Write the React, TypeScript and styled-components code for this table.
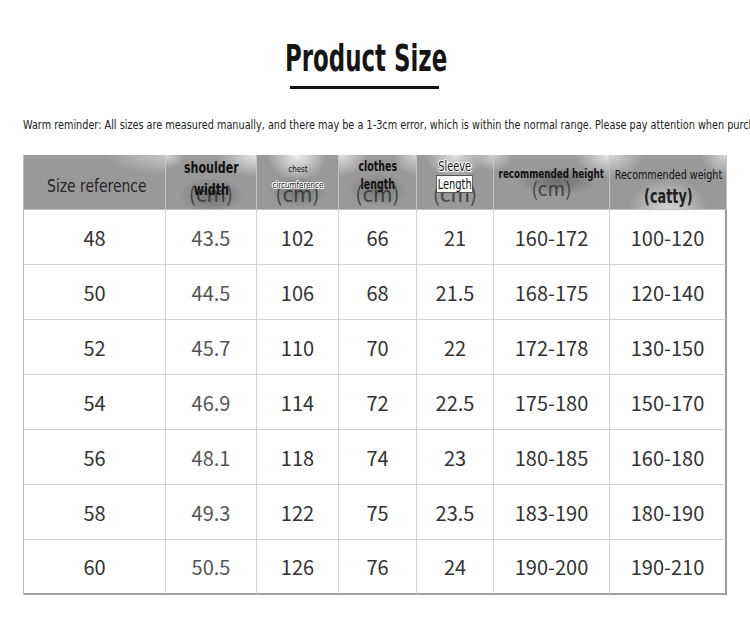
import React from 'react';
import styled, {createGlobalStyle} from 'styled-components';

const Narrow = `"Liberation Sans Narrow", "DejaVu Sans Condensed", "Roboto", sans-serif`;
const Digits = `"Noto Sans CJK SC", "Noto Sans", sans-serif`;

const rows = [
    ['48', '43.5', '102', '66', '21', '160-172', '100-120'],
    ['50', '44.5', '106', '68', '21.5', '168-175', '120-140'],
    ['52', '45.7', '110', '70', '22', '172-178', '130-150'],
    ['54', '46.9', '114', '72', '22.5', '175-180', '150-170'],
    ['56', '48.1', '118', '74', '23', '180-185', '160-180'],
    ['58', '49.3', '122', '75', '23.5', '183-190', '180-190'],
    ['60', '50.5', '126', '76', '24', '190-200', '190-210'],
];

const App = () => {
    return (
        <Page>
            <GlobalStyle/>
            <Title>Product Size</Title>
            <Underline/>
            <Reminder>
                Warm reminder: All sizes are measured manually, and there may be a 1-3cm error, which is within the normal range. Please pay attention when purchasing.
            </Reminder>
            <Table>
                <HeadCell $glow="radial-gradient(ellipse 60px 20px at 100% 0%, rgba(255,255,255,.45), transparent)">
                    <SizeRef>Size reference</SizeRef>
                </HeadCell>
                <HeadCell $glow="radial-gradient(ellipse 40px 22px at 100% 0%, rgba(255,255,255,.75), transparent), radial-gradient(ellipse 20px 14px at 0% 0%, rgba(255,255,255,.6), transparent), radial-gradient(ellipse 32px 18px at 50% 75%, rgba(50,50,50,.4), transparent)">
                    <Label $size={15} $top={2} $sx={0.82}>shoulder<br/>width</Label>
                    <Unit>(cm)</Unit>
                </HeadCell>
                <HeadCell $glow="radial-gradient(ellipse 30px 26px at 50% 0%, rgba(255,255,255,.85), transparent), radial-gradient(ellipse 30px 16px at 50% 68%, rgba(50,50,50,.35), transparent)">
                    <Label $size={9} $top={6} $weight={400} $sx={0.88}>chest<br/><Outlined>circumference</Outlined></Label>
                    <Unit>(cm)</Unit>
                </HeadCell>
                <HeadCell $glow="radial-gradient(ellipse 30px 22px at 0% 0%, rgba(255,255,255,.7), transparent), radial-gradient(ellipse 24px 20px at 100% 0%, rgba(255,255,255,.6), transparent), radial-gradient(ellipse 30px 16px at 50% 65%, rgba(50,50,50,.35), transparent)">
                    <Label $size={14} $top={2} $lh={18} $sx={0.75}>clothes<br/>length</Label>
                    <Unit>(cm)</Unit>
                </HeadCell>
                <HeadCell $glow="radial-gradient(ellipse 30px 24px at 50% 0%, rgba(255,255,255,.7), transparent), radial-gradient(ellipse 20px 16px at 100% 0%, rgba(255,255,255,.6), transparent)">
                    <Label $size={14} $top={2} $lh={18} $weight={400} $sx={0.78}>
                        <Outlined>Sleeve</Outlined><br/><Boxed>Length</Boxed>
                    </Label>
                    <Unit>(cm)</Unit>
                </HeadCell>
                <HeadCell $glow="radial-gradient(ellipse 34px 22px at 100% 0%, rgba(255,255,255,.75), transparent), radial-gradient(ellipse 20px 16px at 0% 0%, rgba(255,255,255,.5), transparent), radial-gradient(ellipse 40px 14px at 55% 48%, rgba(40,40,40,.4), transparent)">
                    <Label $size={13} $top={9} $sx={0.75}>recommended height</Label>
                    <Unit $small>(cm)</Unit>
                </HeadCell>
                <HeadCell $glow="radial-gradient(ellipse 34px 22px at 0% 0%, rgba(255,255,255,.6), transparent), radial-gradient(ellipse 26px 22px at 100% 0%, rgba(255,255,255,.6), transparent), radial-gradient(ellipse 40px 30px at 50% 100%, rgba(255,255,255,.6), transparent)">
                    <Label $size={13} $top={10} $weight={400} $sx={0.82}>Recommended weight</Label>
                    <Catty>(catty)</Catty>
                </HeadCell>
                {rows.map((r, i) =>
                    r.map((v, j) => (
                        <Cell key={i + '-' + j} $light={j === 1} $last={j === 6} $bottom={i === rows.length - 1}>
                            {v}
                        </Cell>
                    ))
                )}
            </Table>
        </Page>
    )
}

export default App;

const GlobalStyle = createGlobalStyle`
  html, body {
    margin: 0;
    padding: 0;
    background: #fff;
  }
  body {
    overflow: hidden;
  }
`

const Page = styled.div`
  width: 750px;
  height: 620px;
  padding-top: 38px;
  box-sizing: border-box;
  overflow: hidden;
  display: flex;
  flex-direction: column;
  align-items: flex-start;
`
const Title = styled.h1`
  align-self: center;
  margin: 0 17px 0 0;
  font-family: ${Narrow};
  font-weight: 700;
  font-size: 38px;
  line-height: 40px;
  color: #151515;
  transform: scaleX(0.67);
  white-space: nowrap;
`
const Underline = styled.div`
  align-self: center;
  width: 149px;
  height: 3px;
  background: #111;
  margin: 8px 21px 0 0;
`
const Reminder = styled.p`
  margin: 28px 0 0 23px;
  font-family: ${Narrow};
  font-size: 13px;
  line-height: 16px;
  color: #222;
  white-space: nowrap;
  transform: scaleX(0.83);
  transform-origin: left center;
`
const Table = styled.div`
  margin: 22px 0 0 23px;
  display: grid;
  grid-template-columns: 142px 91px 82px 78px 77px 116px 117px;
  grid-auto-rows: 55px;
  border-left: 1px solid #bbb;
  box-sizing: border-box;
`
const HeadCell = styled.div<{ $glow?: string }>`
  display: grid;
  grid-template-columns: minmax(0, 1fr);
  background: ${p => p.$glow ? p.$glow + ', ' : ''}#999;
  border-right: 1px solid #c4c4c4;
  border-bottom: 1px solid #bdbdbd;
  overflow: hidden;
  & > * {
    grid-area: 1 / 1;
    justify-self: center;
  }
`
const SizeRef = styled.span`
  align-self: center;
  margin-top: 6px;
  margin-left: 4px;
  font-family: ${Narrow};
  font-size: 18px;
  color: #262626;
  transform: scaleX(0.86);
  white-space: nowrap;
`
const Label = styled.span<{ $size: number, $top: number, $lh?: number, $weight?: number, $sx?: number }>`
  align-self: start;
  margin-top: ${p => p.$top}px;
  font-family: ${Narrow};
  font-size: ${p => p.$size}px;
  line-height: ${p => p.$lh ?? p.$size + 7}px;
  font-weight: ${p => p.$weight ?? 700};
  color: #111;
  text-align: center;
  white-space: nowrap;
  position: relative;
  z-index: 1;
  transform: scaleX(${p => p.$sx ?? 1});
`
const Outlined = styled.span`
  text-shadow: -1px 0 #fff, 1px 0 #fff, 0 -1px #fff, 0 1px #fff, 1px 1px #fff, -1px -1px #fff;
`
const Boxed = styled.span`
  background: #fff;
  outline: 1px solid #555;
  padding: 0 1px;
`
const Unit = styled.span<{ $small?: boolean }>`
  align-self: end;
  margin-bottom: ${p => p.$small ? 9 : 4}px;
  font-family: ${Digits};
  font-size: ${p => p.$small ? 19 : 21}px;
  line-height: 24px;
  color: rgba(40, 40, 40, .75);
`
const Catty = styled.span`
  align-self: end;
  margin-bottom: 2px;
  font-family: ${Narrow};
  font-size: 19px;
  font-weight: 700;
  color: #222;
  transform: scaleX(0.75);
`
const Cell = styled.div<{ $light?: boolean, $last?: boolean, $bottom?: boolean }>`
  display: flex;
  justify-content: center;
  align-items: center;
  font-family: ${Digits};
  font-size: 20px;
  color: ${p => p.$light ? '#555' : '#333'};
  border-right: ${p => p.$last ? '2px solid #9a9a9a' : '1px solid #d2d2d2'};
  border-bottom: ${p => p.$bottom ? '2px solid #a0a0a0' : '1px solid #d2d2d2'};
  background: #fff;
`
